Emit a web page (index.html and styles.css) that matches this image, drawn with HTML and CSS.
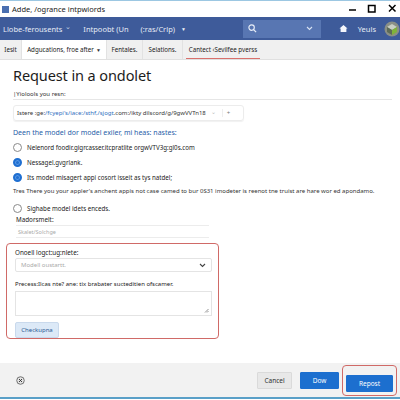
FILE: index.html
```html
<!DOCTYPE html>
<html>
<head>
<meta charset="utf-8">
<link rel="stylesheet" href="styles.css">
</head>
<body>
<div class="window">
  <div class="titlebar">
    <div class="app-icon"></div>
    <span class="title">Adde, /ogrance intpwiords</span>
    <div class="controls">
      <svg width="50" height="12" viewBox="0 0 50 12">
        <line x1="1" y1="7" x2="8" y2="7" stroke="#000" stroke-width="1.5"/>
        <rect x="20.5" y="2.5" width="6.5" height="6.5" fill="none" stroke="#000" stroke-width="1.5"/>
        <path d="M41 2 L47.5 8.5 M47.5 2 L41 8.5" stroke="#000" stroke-width="1.5"/>
      </svg>
    </div>
  </div>
  <div class="navbar">
    <span class="nav-item">Llobe-ferousents <span class="caret">&#8964;</span></span>
    <span class="nav-item">Intpoobt (Un</span>
    <span class="nav-item">(:ras/Crlp) <span class="tri">&#9660;</span></span>
    <div class="search">
      <svg width="9" height="9" viewBox="0 0 10 10"><circle cx="4" cy="4" r="3" fill="none" stroke="#e8eef8" stroke-width="1.3"/><line x1="6.2" y1="6.2" x2="9" y2="9" stroke="#e8eef8" stroke-width="1.4"/></svg>
      <svg width="7" height="5" viewBox="0 0 7 5"><path d="M1 1 L3.5 3.5 L6 1" fill="none" stroke="#d8e2f2" stroke-width="1.1"/></svg>
    </div>
    <svg class="home" width="9" height="9" viewBox="0 0 10 10"><path d="M5 1 L9.5 5 L8.2 5 L8.2 9 L1.8 9 L1.8 5 L0.5 5 Z" fill="#f4f6fb"/></svg>
    <span class="user">Yeuls</span>
    <div class="avatar">
      <svg width="16" height="16" viewBox="0 0 16 16"><circle cx="8" cy="8" r="7.5" fill="#8a8f86"/><path d="M3 6 L8 3 L13 6 L8 9 Z" fill="#c9cfc4"/><path d="M3 6 L8 9 L8 14 L3 11 Z" fill="#5d6b58"/><path d="M13 6 L8 9 L8 14 L13 11 Z" fill="#7fb33a"/></svg>
    </div>
  </div>
  <div class="tabs">
    <span class="tab t1">Iesit</span>
    <span class="tab t2 active">Adgucations, froe after <span class="tri dark">&#9660;</span></span>
    <span class="tab t3">Fentales.</span>
    <span class="tab t4">Selations.</span>
    <span class="tab t5 red">Cantect ‹Sevilfee pverss</span>
  </div>
  <div class="content">
    <h1>Request in a ondolet</h1>
    <div class="small-label">|Yiolools you resn:</div>
    <div class="url-row">
      <div class="url-box">
        <span>Istere :ge:<span class="link">/fcyepi's/iace:/sthf,/sjogt</span>.com:/ikty dilscord/g/9gwVVTn18</span>
        <span class="urlchev">&#8964;</span>
        <span class="plus">+</span>
      </div>
    </div>
    <div class="blue-q">Deen the model dor model exiler, mi heas: nastes:</div>
    <label class="radio"><span class="rb"></span>Nelenord foodir.gigrcasser.itcpratlite orgwVTV3g:gl0s.com</label>
    <label class="radio"><span class="rb on"></span>Nessagel.gvgrlank.</label>
    <label class="radio"><span class="rb on"></span>Its model misagert appi cosort isseit as tys natdel;</label>
    <p class="para">Tres There you your appler's anchent appis not case camed to bur 0S31 imodeter is reenot tne truist are hare wor ed apondamo.</p>
    <label class="radio r4"><span class="rb"></span>Sighabe model idets enceds.</label>
    <div class="sub">
      <div class="lbl">Madorsmelt:</div>
      <div class="line-input">Skalet/Solchge</div>
    </div>
    <div class="redbox">
      <div class="lbl">Onoell logct:ug:nlete:</div>
      <div class="select">Modell oustartt.<svg width="7" height="5" viewBox="0 0 7 5"><path d="M1 1 L3.5 3.5 L6 1" fill="none" stroke="#444" stroke-width="1.1"/></svg></div>
      <div class="lbl lbl2">Precess:Ilcas nte? ane: tix brabater sucteditien ofscamer.</div>
      <div class="textarea"><svg width="5" height="5" viewBox="0 0 5 5"><path d="M1 4.5 L4.5 1 M3 4.5 L4.5 3" stroke="#777" stroke-width="0.8"/></svg></div>
      <button class="chk">Checkupna</button>
    </div>
  </div>
  <div class="footer">
    <svg class="ficon" width="9" height="9" viewBox="0 0 10 10"><circle cx="5" cy="5" r="4.2" fill="#e4e4e4" stroke="#666" stroke-width="1"/><path d="M3.4 3.4 L6.6 6.6 M6.6 3.4 L3.4 6.6" stroke="#333" stroke-width="1.1"/></svg>
    <div class="btns">
      <button class="btn cancel">Cancel</button>
      <button class="btn primary">Dow</button>
      <div class="focus-ring"><button class="btn primary wide">Repost</button></div>
    </div>
  </div>
</div>
</body>
</html>
```
FILE: styles.css
```css
* { box-sizing: border-box; }
html, body { margin: 0; padding: 0; }
body {
  width: 400px; height: 400px; overflow: hidden;
  font-family: "Noto Sans", "Open Sans", sans-serif;
  color: #222; background: #fff;
}
.window { width: 400px; height: 400px; display: flex; flex-direction: column; }
.titlebar {
  height: 17px; display: flex; align-items: center; flex-shrink: 0;
  border-top: 1px solid #9cc7e2; background: #fff; padding-left: 2px;
  position: relative; z-index: 2;
}
.app-icon { width: 7px; height: 7px; background: #4a6fb0; margin-right: 3px; flex-shrink: 0; }
.title { font-size: 7.5px; color: #222; }
.controls {
  margin-left: auto; margin-right: 2px; flex: 0 0 50px; width: 50px; height: 12px;
  display: flex; position: relative; z-index: 3;
}
.controls svg { display: block; }
.navbar {
  height: 23px; background: #3e5b9a; display: flex; align-items: center; flex-shrink: 0;
  padding-left: 3px; color: #e6ecf6; font-size: 7.5px;
}
.nav-item { margin-right: 12px; display: flex; align-items: center; gap: 3px; }
.caret { font-size: 7px; margin-top: -4px; color: #c8d3e8; }
.tri { font-size: 5px; margin-left: 3px; color: #eef2f9; }
.tri.dark { color: #333; margin-left: 2px; }
.search {
  margin-left: auto; width: 78px; height: 18px; background: #5876b2;
  display: flex; align-items: center; justify-content: space-between; padding: 0 8px 0 5px;
}
.home { margin-left: 18px; }
.user { margin-left: 10px; font-size: 7.5px; color: #e6ecf6; }
.avatar { margin-left: 8px; margin-right: 0; display: flex; }
.tabs {
  height: 20px; background: #f0f0f0; display: flex; align-items: stretch; flex-shrink: 0;
  border-bottom: 1px solid #e0e0e0; font-size: 6.2px; color: #222;
}
.tab { display: flex; align-items: center; justify-content: center; border-right: 1px solid #e2e2e2; white-space: nowrap; }
.t1 { width: 22px; }
.t2 { width: 85px; }
.t3 { width: 36px; }
.t4 { width: 40px; }
.t5 { width: 74px; margin-left: 3px; }
.tab.active { background: #fff; }
.tab.red { border-bottom: 1.5px solid #d9706c; border-right: none; }
.content { padding: 7px 0 0 13px; flex: 1; }
h1 { font-size: 14.5px; line-height: 17px; font-weight: 400; margin: 0; color: #1c1c1c; letter-spacing: -0.1px; }
.small-label { font-size: 6px; line-height: 8px; color: #333; margin-top: 6px; }
.url-row { border-top: 1px solid #e6e6e6; margin-right: 8px; margin-top: 1px; padding-top: 5px; }
.url-box {
  width: 231px; height: 16px; border: 1px solid #ececec; border-radius: 3px;
  display: flex; align-items: center; font-size: 6px; color: #333; padding-left: 3px;
  box-shadow: 0 1px 1px rgba(0,0,0,0.06);
}
.link { color: #2f6fc0; }
.urlchev { color: #bbb; margin-left: 5px; font-size: 6px; margin-top: -3px; }
.plus { color: #777; margin-left: 6px; border-left: 1px solid #eee; padding-left: 4px; font-size: 6px; }
.blue-q { color: #1f5ea8; font-size: 7px; line-height: 9px; margin-top: 7px; }
.radio { display: flex; align-items: center; font-size: 6.2px; color: #222; margin-top: 5px; height: 10px; }
.radio + .radio { margin-top: 5px; }
.rb { width: 9px; height: 9px; border: 1px solid #8a8a8a; border-radius: 50%; margin-right: 5px; background: #fff; flex-shrink: 0; }
.rb.on { border: 2.5px solid #1f6fd1; background: #1f6fd1; box-shadow: inset 0 0 0 1px #5b9ae6; }
.para { font-size: 6px; line-height: 8px; color: #333; margin: 5px 0 0; white-space: nowrap; }
.r4 { margin-top: 8px; }
.sub { padding-left: 3px; margin-top: 2px; }
.lbl { font-size: 6.3px; line-height: 9px; color: #222; }
.line-input {
  width: 193px; height: 13px; border-top: 1px solid #ececec; border-bottom: 1px solid #ececec;
  font-size: 5.5px; color: #aaa; padding-left: 2px; display: flex; align-items: center; margin-top: 1px;
}
.redbox {
  margin-left: -7px; margin-top: 5px; width: 213px; height: 96px;
  border: 1.5px solid #d06a67; border-radius: 4px; padding: 4px 0 0 8px;
}
.select {
  width: 197px; height: 14px; border: 1px solid #e4e4e4; border-radius: 2px; margin-top: 1px;
  display: flex; align-items: center; justify-content: space-between; padding: 0 5px;
  font-size: 6px; color: #aaa;
}
.lbl2 { margin-top: 8px; font-size: 6px; }
.textarea {
  width: 197px; height: 25px; border: 1px solid #e4e4e4; margin-top: 2px;
  display: flex; justify-content: flex-end; align-items: flex-end; padding: 0 2px 2px 0;
}
.chk {
  display: block; margin-top: 6px; height: 16px; width: 44px; border: 1px solid #c9d9ec; border-radius: 2px;
  background: #dce9f7; font-family: inherit; font-size: 6px; color: #2a5a95; padding: 0;
}
.footer {
  height: 34px; background: #f2f2f2; margin-bottom: 1px; border-bottom: 2px solid #5aa0c8; flex-shrink: 0;
  display: flex; align-items: center; padding-left: 16px;
  box-sizing: content-box;
}
.btns { margin-left: auto; display: flex; align-items: center; margin-right: 3px; }
.btn { height: 17px; font-family: inherit; font-size: 6.5px; border-radius: 1px; padding: 0; }
.cancel { width: 35px; background: #e8e8e8; border: 1px solid #dadada; color: #333; margin-right: 8px; }
.primary { width: 39px; background: #1c6fcf; border: 1px solid #1c6fcf; color: #fff; }
.wide { width: 47px; }
.focus-ring { margin-left: 3px; border: 1px solid #d06a67; border-radius: 4px; padding: 3px 3px; }
```
